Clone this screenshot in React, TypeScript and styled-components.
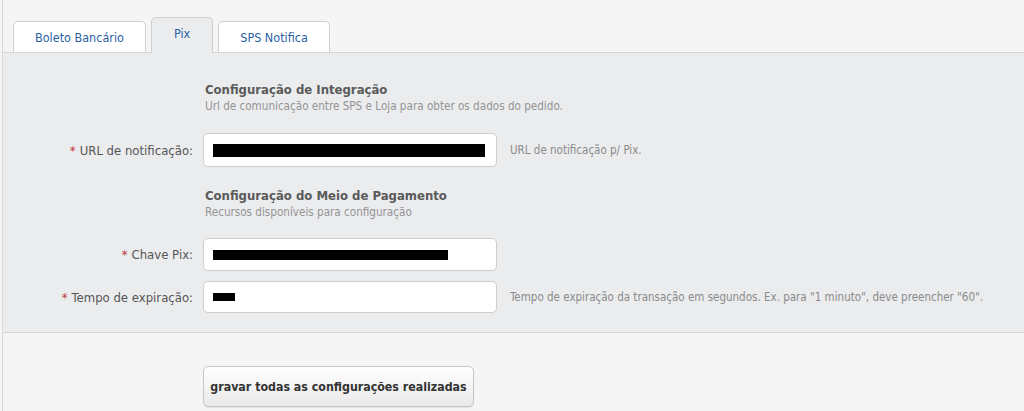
import React from "react";
import styled, { createGlobalStyle } from "styled-components";

const FONT = `"DejaVu Sans Condensed", "DejaVu Sans", Tahoma, sans-serif`;

const GlobalStyle = createGlobalStyle`
  html, body { margin: 0; padding: 0; background: #f5f5f5; }
  body { font-family: ${FONT}; }
  * { box-sizing: border-box; }
`;

const Page = styled.div`
  margin-left: 2px;
  border-left: 1px solid #d8d8d8;
  min-height: 411px;
  background: #f5f5f5;
`;

const TabBar = styled.div`
  display: flex;
  align-items: flex-end;
  gap: 5px;
  height: 53px;
  padding-left: 10px;
  border-bottom: 1px solid #d4d4d4;
`;

const Tab = styled.div<{ $active?: boolean }>`
  display: flex;
  align-items: center;
  justify-content: center;
  padding: 0 ${(p) => (p.$active ? "22px" : "21px")};
  height: ${(p) => (p.$active ? "36px" : "31px")};
  margin-bottom: ${(p) => (p.$active ? "-1px" : "0")};
  padding-bottom: ${(p) => (p.$active ? "4px" : "0")};
  background: ${(p) => (p.$active ? "#ebecee" : "#ffffff")};
  border: 1px solid #cfcfcf;
  border-bottom: none;
  border-radius: 5px 5px 0 0;
  color: #2c5fa6;
  font-size: 12.5px;
`;

const Panel = styled.div`
  background: #ebecee;
  border-bottom: 1px solid #d4d4d4;
  padding: 29px 0 19px;
`;

const SectionHead = styled.div<{ $top?: number }>`
  margin: ${(p) => p.$top ?? 0}px 0 0 202px;
  display: flex;
  flex-direction: column;
`;

const Title = styled.div`
  font-size: 13px;
  font-weight: bold;
  color: #5a5a5a;
  line-height: 16px;
`;

const Subtitle = styled.div`
  font-size: 11.6px;
  color: #949494;
  line-height: 16px;
`;

const Row = styled.div<{ $top: number; $h?: number }>`
  display: grid;
  grid-template-columns: 190px 304px auto;
  align-items: center;
  margin-top: ${(p) => p.$top}px;
  height: ${(p) => p.$h ?? 33}px;
`;

const Label = styled.label`
  text-align: right;
  font-size: 13px;
  color: #555;
`;

const Star = styled.span`
  color: #c0393b;
  margin-right: 4px;
`;

const Field = styled.div`
  margin-left: 10px;
  height: 100%;
  background: #fff;
  border: 1px solid #cdcdcd;
  border-radius: 5px;
  display: flex;
  align-items: center;
  padding-left: 9px;
`;

const Redacted = styled.span<{ $w: number; $h: number }>`
  display: block;
  width: ${(p) => p.$w}px;
  height: ${(p) => p.$h}px;
  background: #000;
`;

const Hint = styled.div`
  margin-left: 13px;
  font-size: 11.5px;
  color: #8a8a8a;
  white-space: nowrap;
`;

const Footer = styled.div`
  padding: 33px 0 0 200px;
`;

const Button = styled.button`
  width: 271px;
  height: 41px;
  font-family: ${FONT};
  font-size: 12.3px;
  font-weight: bold;
  color: #333;
  background: linear-gradient(#ffffff, #e9e9e9);
  border: 1px solid #c6c6c6;
  border-radius: 5px;
  box-shadow: 0 1px 1px rgba(0, 0, 0, 0.08);
  cursor: pointer;
  padding: 0;
`;

export default function App() {
  return (
    <>
      <GlobalStyle />
      <Page>
        <TabBar>
          <Tab>Boleto Bancário</Tab>
          <Tab $active>Pix</Tab>
          <Tab>SPS Notifica</Tab>
        </TabBar>
        <Panel>
          <SectionHead>
            <Title>Configuração de Integração</Title>
            <Subtitle>Url de comunicação entre SPS e Loja para obter os dados do pedido.</Subtitle>
          </SectionHead>
          <Row $top={19} $h={34}>
            <Label><Star>*</Star>URL de notificação:</Label>
            <Field><Redacted $w={272} $h={13} /></Field>
            <Hint>URL de notificação p/ Pix.</Hint>
          </Row>
          <SectionHead $top={21}>
            <Title>Configuração do Meio de Pagamento</Title>
            <Subtitle>Recursos disponíveis para configuração</Subtitle>
          </SectionHead>
          <Row $top={18}>
            <Label><Star>*</Star>Chave Pix:</Label>
            <Field><Redacted $w={235} $h={10} /></Field>
            <span />
          </Row>
          <Row $top={10} $h={32}>
            <Label><Star>*</Star>Tempo de expiração:</Label>
            <Field><Redacted $w={22} $h={8} /></Field>
            <Hint>Tempo de expiração da transação em segundos. Ex. para "1 minuto", deve preencher "60".</Hint>
          </Row>
        </Panel>
        <Footer>
          <Button>gravar todas as configurações realizadas</Button>
        </Footer>
      </Page>
    </>
  );
}
